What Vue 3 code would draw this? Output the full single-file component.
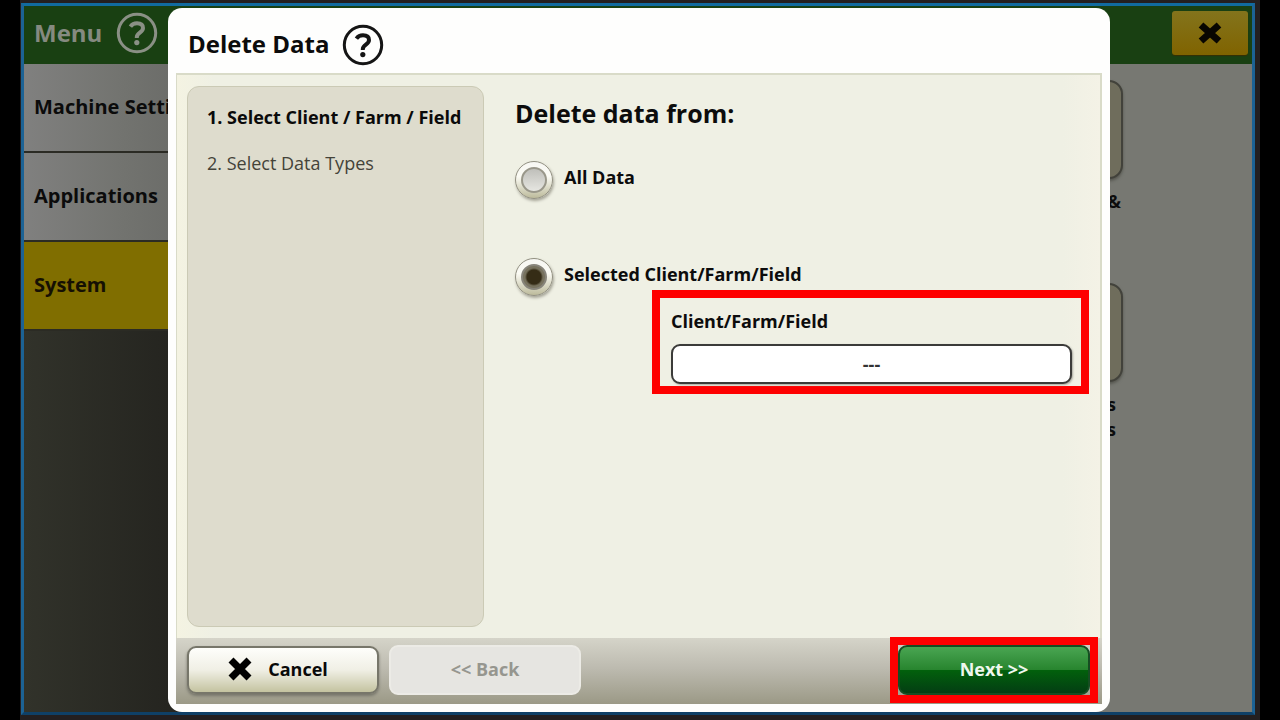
<script setup>
import { ref } from 'vue'

const menu = [
  { label: 'Machine Settings', active: false },
  { label: 'Applications', active: false },
  { label: 'System', active: true },
]
const tiles = [['&'], ['s', 's']]
const scope = ref('selected')
const target = ref('---')
</script>

<template>
  <div class="page">
    <div class="frame">
      <div class="screen">
        <header class="topbar">
          <span class="topbar-title">Menu</span>
          <button class="help help-dim" aria-label="Menu help">
            <svg viewBox="0 0 42 42" width="42" height="42" fill="none" stroke="currentColor">
              <circle cx="21" cy="21" r="18.7" stroke-width="3" />
              <path d="M14.4 14.6c1.6-2.2 3.8-3.3 6.6-3.3 3.8 0 6 1.8 6 4.8 0 4.6-6.2 4.6-6.2 9.1v.8" stroke-width="4" />
              <circle cx="20.8" cy="30.6" r="2.6" fill="currentColor" stroke="none" />
            </svg>
          </button>
          <button class="close" aria-label="Close">
            <svg viewBox="0 0 24 24" width="24" height="24" fill="none" stroke="#080601" stroke-width="7">
              <path d="M3 4 21 20M21 4 3 20" />
            </svg>
          </button>
        </header>
        <div class="main">
          <nav class="menu">
            <a v-for="m in menu" :key="m.label" href="#" class="menu-item" :class="{ active: m.active }">{{ m.label }}</a>
          </nav>
          <div class="tiles">
            <div v-for="(lines, i) in tiles" :key="i" class="tile">
              <div class="tile-face"></div>
              <div class="tile-label">
                <div v-for="(l, j) in lines" :key="j">{{ l }}</div>
              </div>
            </div>
          </div>
        </div>

        <div class="overlay">
          <section class="dialog" role="dialog" aria-labelledby="dialog-title">
            <header class="dialog-head">
              <h1 id="dialog-title">Delete Data</h1>
              <button class="help" aria-label="Delete Data help">
                <svg viewBox="0 0 42 42" width="42" height="42" fill="none" stroke="currentColor">
                  <circle cx="21" cy="21" r="18.7" stroke-width="3" />
                  <path d="M14.4 14.6c1.6-2.2 3.8-3.3 6.6-3.3 3.8 0 6 1.8 6 4.8 0 4.6-6.2 4.6-6.2 9.1v.8" stroke-width="4" />
                  <circle cx="20.8" cy="30.6" r="2.6" fill="currentColor" stroke="none" />
                </svg>
              </button>
            </header>
            <div class="dialog-body">
              <div class="steps">
                <div class="step current">1. Select Client / Farm / Field</div>
                <div class="step">2. Select Data Types</div>
              </div>
              <div class="form">
                <h2>Delete data from:</h2>
                <label class="choice">
                  <input v-model="scope" type="radio" name="scope" value="all" />
                  <span>All Data</span>
                </label>
                <label class="choice">
                  <input v-model="scope" type="radio" name="scope" value="selected" />
                  <span>Selected Client/Farm/Field</span>
                </label>
                <div class="target">
                  <label for="target">Client/Farm/Field</label>
                  <input id="target" v-model="target" type="text" />
                </div>
              </div>
            </div>
            <footer class="dialog-foot">
              <button class="btn cancel">
                <svg viewBox="0 0 24 24" width="24" height="24" fill="none" stroke="#000" stroke-width="7">
                  <path d="M3 3 21 21M21 3 3 21" />
                </svg>
                Cancel
              </button>
              <button class="btn back" disabled>&lt;&lt; Back</button>
              <div class="next-wrap">
                <button class="btn next">Next &gt;&gt;</button>
              </div>
            </footer>
          </section>
        </div>
      </div>
    </div>
  </div>
</template>

<style>
body {
  margin: 0;
  background: #000;
}
</style>

<style scoped>
.page,
.page * {
  box-sizing: border-box;
}
.page {
  min-height: 100vh;
  display: flex;
  padding: 0 20px;
  background: #000;
  font-family: "Open Sans", "Noto Sans", sans-serif;
  font-weight: 700;
  color: #0c0c0c;
}
.frame {
  flex: 1;
  display: flex;
  padding: 3px 5px 5px 1px;
  background: #231f20;
}
button {
  font: inherit;
  border: 0;
  padding: 0;
  cursor: pointer;
}
.screen {
  flex: 1;
  position: relative;
  display: flex;
  flex-direction: column;
  border: 3px solid #1c6294;
  border-top-color: #116b9f;
  border-bottom-color: #0f4067;
}
.topbar {
  display: flex;
  align-items: center;
  height: 58px;
  padding: 0 4px 4px 10px;
  background: #194012;
}
.topbar-title {
  font-size: 24px;
  line-height: 32px;
  color: #858a80;
}
.help {
  display: block;
  width: 42px;
  height: 42px;
  background: none;
  color: #151515;
}
.help svg,
.close svg {
  display: block;
}
.help-dim {
  margin-left: 14px;
  color: #8a9085;
}
.close {
  display: grid;
  place-items: center;
  width: 76px;
  height: 44px;
  margin-left: auto;
  border-radius: 3px;
  background: linear-gradient(#83741c, #806300);
  box-shadow: 0 1px 1px #372f05;
}
.main {
  flex: 1;
  display: flex;
  justify-content: space-between;
  background: #777872;
}
.menu {
  width: 200px;
  background: linear-gradient(90deg, #31322a, #252520 72%);
}
.menu-item {
  display: flex;
  align-items: center;
  height: 89px;
  padding: 0 10px 3px;
  border-bottom: 2px solid #2b2b24;
  background: linear-gradient(90deg, #80807f, #72736f 50%, #656663);
  font-size: 20px;
  color: #0b0b0b;
  text-decoration: none;
  white-space: nowrap;
}
.menu-item.active {
  background: #806e00;
  color: #151003;
}
.tiles {
  display: flex;
  flex-direction: column;
  padding: 16px 129px 0 0;
}
.tile {
  width: 100px;
  height: 203px;
}
.tile-face {
  height: 99px;
  border: 2px solid #42423b;
  border-radius: 14px;
  background: #6f6d5c;
  box-shadow: 0 2px 3px #55564f;
}
.tile-label {
  padding: 10px 2px 0 0;
  text-align: right;
  font-size: 18px;
  line-height: 25px;
}
.tile:nth-child(2) .tile-label {
  padding-right: 7px;
}
.overlay {
  position: absolute;
  inset: 0;
  display: flex;
  padding: 2px 142px 0 144px;
}
.dialog {
  flex: 1;
  display: flex;
  flex-direction: column;
  padding: 0 8px 8px;
  border-radius: 14px;
  background: #fefefd;
}
.dialog-head {
  display: flex;
  align-items: center;
  gap: 13px;
  height: 65px;
  padding: 8px 12px 0;
}
h1 {
  margin: 0;
  padding-bottom: 2px;
  font-size: 24px;
  line-height: 32px;
}
.dialog-body {
  flex: 1;
  display: flex;
  gap: 31px;
  padding: 11px 11px 11px 10px;
  border: 2px solid #d9dbc8;
  border-width: 2px 2px 0 1px;
  background: linear-gradient(90deg, #f4f3e2, #eff0e4 4%, #eff0e4 96%, #f4f2e6);
}
.steps {
  width: 297px;
  padding: 14px 0 0 19px;
  border: 1px solid #cbcab5;
  border-radius: 12px;
  background: #dedccd;
}
.step {
  margin-bottom: 14px;
  font-size: 18px;
  line-height: 32px;
  font-weight: 400;
  color: #444339;
  white-space: nowrap;
}
.step.current {
  font-weight: 700;
  color: #0a0a0a;
}
.form {
  flex: 1;
  display: flex;
  flex-direction: column;
}
h2 {
  margin: 9px 0 29px;
  font-size: 25px;
  line-height: 36px;
}
.choice {
  display: flex;
  align-items: center;
  gap: 11px;
  height: 40px;
  margin-bottom: 57px;
  font-size: 18px;
  line-height: 28px;
}
.choice span {
  padding-bottom: 6px;
}
.choice input {
  appearance: none;
  display: grid;
  place-items: center;
  width: 38px;
  height: 38px;
  margin: 0;
  border: 1px solid #929082;
  border-radius: 50%;
  background: linear-gradient(#f7f7f3, #fbfbf4 40%, #bdbb9c);
  box-shadow: 1px 2px 3px #a5a497;
}
.choice input::before {
  content: "";
  width: 22px;
  height: 22px;
  border: 2px solid #99978a;
  border-radius: 50%;
  background: linear-gradient(#bfbfba, #e6e6e1);
}
.choice input:checked::before {
  border-color: #87847a;
  background: radial-gradient(circle at center, #352c16 0 7px, #77725e 9px);
}
.target {
  display: flex;
  flex-direction: column;
  margin: -64px 0 0 137px;
  padding: 9px 9px 2px 11px;
  border: 8px solid #fe0000;
}
.target label {
  font-size: 18px;
  line-height: 28px;
}
.target input {
  width: 100%;
  height: 40px;
  margin-top: 9px;
  padding: 0;
  border: 2px solid #3b3b39;
  border-radius: 9px;
  background: #fff;
  box-shadow: 1px 1px 2px #a9a99f;
  font: inherit;
  font-size: 18px;
  text-align: center;
  color: #333;
}
.dialog-foot {
  display: flex;
  align-items: center;
  gap: 10px;
  height: 66px;
  padding: 0 12px 2px 11px;
  background: linear-gradient(#d5d4c9, #bdbbb0 45%, #9b9986);
}
.btn {
  display: flex;
  align-items: center;
  justify-content: center;
  width: 192px;
  height: 50px;
  padding-bottom: 2px;
  border-radius: 9px;
  font-size: 18px;
}
.cancel {
  gap: 16px;
  height: 48px;
  padding-right: 10px;
  border: 2px solid #77766a;
  background: linear-gradient(#fefefb, #f0efe5 50%, #c4c3a0);
  box-shadow: 0 2px 3px #77766b;
  color: #090909;
}
.back {
  border: 2px solid #ecebe6;
  background: #e6e5e1;
  color: #96968f;
}
.next-wrap {
  position: relative;
  margin-left: auto;
}
.next-wrap::after {
  content: "";
  position: absolute;
  inset: -8px;
  border: 8px solid #fe0000;
  pointer-events: none;
}
.next {
  border: 2px solid #164d22;
  background: linear-gradient(#4aa552, #28852f 49%, #02600c 51%, #033e13);
  color: #eff8ee;
}
</style>
